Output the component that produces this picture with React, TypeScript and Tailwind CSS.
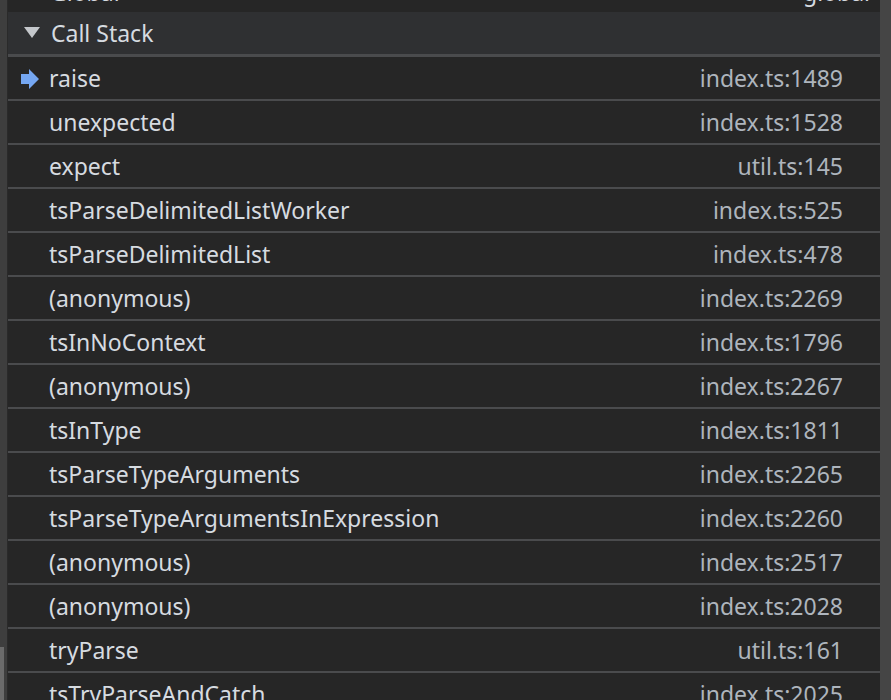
import React from 'react';

interface Frame {
  name: string;
  location: string;
}

const frames: Frame[] = [
  { name: 'raise', location: 'index.ts:1489' },
  { name: 'unexpected', location: 'index.ts:1528' },
  { name: 'expect', location: 'util.ts:145' },
  { name: 'tsParseDelimitedListWorker', location: 'index.ts:525' },
  { name: 'tsParseDelimitedList', location: 'index.ts:478' },
  { name: '(anonymous)', location: 'index.ts:2269' },
  { name: 'tsInNoContext', location: 'index.ts:1796' },
  { name: '(anonymous)', location: 'index.ts:2267' },
  { name: 'tsInType', location: 'index.ts:1811' },
  { name: 'tsParseTypeArguments', location: 'index.ts:2265' },
  { name: 'tsParseTypeArgumentsInExpression', location: 'index.ts:2260' },
  { name: '(anonymous)', location: 'index.ts:2517' },
  { name: '(anonymous)', location: 'index.ts:2028' },
  { name: 'tryParse', location: 'util.ts:161' },
  { name: 'tsTryParseAndCatch', location: 'index.ts:2025' },
];

function CurrentArrow() {
  return (
    <svg width="19" height="20" viewBox="0 0 19 20" className="shrink-0">
      <path d="M0 5 H8 V0 L18 10 L8 20 V15 H0 Z" fill="#75a7f2" />
    </svg>
  );
}

function Triangle({ open }: { open: boolean }) {
  return (
    <svg width="16" height="12" viewBox="0 0 16 12" className="shrink-0">
      {open ? (
        <path d="M0 0 H16 L8 11 Z" fill="#c4c7cb" />
      ) : (
        <path d="M2 -2 L12 6 L2 14 Z" fill="#c4c7cb" />
      )}
    </svg>
  );
}

export default function App() {
  return (
    <div
      className="flex h-[700px] w-[891px] overflow-hidden bg-[#262626]"
      style={{ fontFamily: '"Noto Sans", "Open Sans", sans-serif' }}
    >
      <div className="flex w-[8px] shrink-0 flex-col border-r border-[#2a2a2a] bg-[#3e3e3e]">
        <div className="flex-1" />
        <div className="h-[53px] w-[4px] bg-[#6b6b6b]" />
      </div>

      <div className="flex min-w-0 flex-1 flex-col text-[23px] leading-none">
        <div className="-mt-[32px] flex h-[44px] shrink-0 items-center justify-between border-b-2 border-[#262626] pl-[14px] pr-[10px] pt-[6px]">
          <div className="flex items-center gap-[12px] text-[#d6dbe0]">
            <Triangle open={false} />
            <span>Global</span>
          </div>
          <span className="text-[#d6dbe0]">global</span>
        </div>

        <div className="flex h-[45px] shrink-0 items-center gap-[11px] border-b-[3px] border-[#4a4b4d] bg-[#2f3032] pl-[16px] text-[#d6dbe0]">
          <Triangle open />
          <span className="pt-[1px]">Call Stack</span>
        </div>

        {frames.map((frame, index) => (
          <div
            key={index}
            className="flex h-[44px] shrink-0 items-center justify-between border-b-2 border-[#4a4b4d] pr-[37px] pt-[1px]"
          >
            <div className="flex items-center">
              <div className="flex w-[41px] shrink-0 justify-start pl-[13px]">
                {index === 0 && <CurrentArrow />}
              </div>
              <span className="text-[#d6dbe0]">{frame.name}</span>
            </div>
            <span className="text-[#aeb5bd]">{frame.location}</span>
          </div>
        ))}
      </div>

      <div className="w-[11px] shrink-0 bg-[#454545]" />
    </div>
  );
}
